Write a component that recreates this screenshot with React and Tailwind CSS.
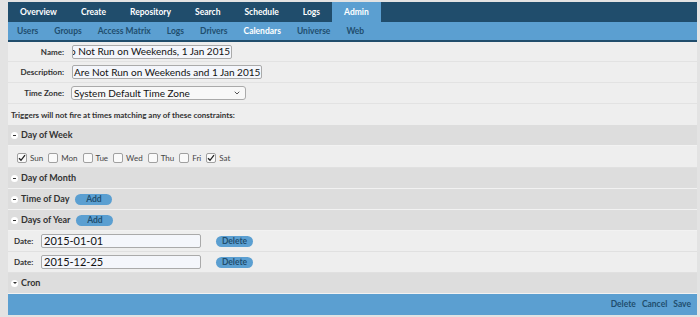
import React from 'react';
import { ChevronDown } from 'lucide-react';

const font = { fontFamily: 'Lato, "Open Sans", sans-serif' };

const topNav = ['Overview', 'Create', 'Repository', 'Search', 'Schedule', 'Logs', 'Admin'];
const subNav = ['Users', 'Groups', 'Access Matrix', 'Logs', 'Drivers', 'Calendars', 'Universe', 'Web'];
const days = [
  { label: 'Sun', checked: true },
  { label: 'Mon', checked: false },
  { label: 'Tue', checked: false },
  { label: 'Wed', checked: false },
  { label: 'Thu', checked: false },
  { label: 'Fri', checked: false },
  { label: 'Sat', checked: true },
];

function Toggle({ open = true }) {
  return (
    <span className="w-[7px] h-[7px] rounded-full bg-white flex items-center justify-center shrink-0">
      {open ? (
        <span className="w-[3px] h-[1px] bg-[#333]" />
      ) : (
        <span className="w-0 h-0 border-l-[2px] border-r-[2px] border-t-[2px] border-l-transparent border-r-transparent border-t-[#333]" />
      )}
    </span>
  );
}

function AddButton() {
  return (
    <span className="ml-[3px] w-[37px] h-[11px] rounded-full bg-[#5b9fd1] text-[#1f4e6e] text-[8.5px] font-bold flex items-center justify-center">
      Add
    </span>
  );
}

function SectionHeader({ title, add, open = true }) {
  return (
    <div className="h-[21px] bg-[#dddddd] border-b border-[#f2f2f2] flex items-center pl-[3px] gap-[3px]">
      <Toggle open={open} />
      <span className="text-[9px] font-bold text-[#333]">{title}</span>
      {add && <AddButton />}
    </div>
  );
}

function Checkbox({ checked }) {
  return (
    <span className="w-[10px] h-[10px] rounded-[2px] border border-[#a0a0a0] bg-[#fafafa] flex items-center justify-center">
      {checked && (
        <svg width="8" height="8" viewBox="0 0 8 8">
          <path d="M1 4.2 L3 6.3 L7 1.2" fill="none" stroke="#222" strokeWidth="1.3" />
        </svg>
      )}
    </span>
  );
}

function FormRow({ label, children, h = 'h-[21px]' }) {
  return (
    <div className={`${h} flex items-center border-b border-[#e2e2e2]`}>
      <span className="w-[56px] text-right text-[8px] font-bold text-[#333]">{label}</span>
      <div className="ml-[8px] flex items-center">{children}</div>
    </div>
  );
}

function DateRow({ value }) {
  return (
    <div className="h-[21px] bg-[#eeeeee] border-b border-[#e0e0e0] flex items-center pl-[6px]">
      <span className="w-[27px] text-[8px] font-bold text-[#333]">Date:</span>
      <div className="w-[160px] h-[14px] border border-[#aaa] rounded-[2px] bg-[#f4f6fb] flex items-center pl-[2px] text-[11px] text-[#111]">
        {value}
      </div>
      <span className="ml-[15px] w-[37px] h-[11px] rounded-full bg-[#5b9fd1] text-[#1f4e6e] text-[8.5px] font-bold flex items-center justify-center">
        Delete
      </span>
    </div>
  );
}

export default function App() {
  return (
    <div className="min-h-screen bg-[#e3e3e3] pt-[2px] pl-[8px] pr-[3px]" style={font}>
      <div className="bg-[#eeeeee]">
        {/* top nav */}
        <div className="h-[20px] bg-[#204d6c] flex">
          {topNav.map((t) => (
            <div
              key={t}
              className={`px-3 flex items-center text-[8.5px] font-bold text-white ${t === 'Admin' ? 'bg-[#5b9fd1]' : ''}`}
            >
              {t}
            </div>
          ))}
        </div>
        {/* sub nav */}
        <div className="h-[20px] bg-[#5b9fd1] border-b-2 border-[#204d6c] flex pl-[1px]">
          {subNav.map((t) => (
            <div
              key={t}
              className={`px-[8px] flex items-center text-[8.5px] font-bold ${t === 'Calendars' ? 'text-white' : 'text-[#1f4e6e]'}`}
            >
              {t}
            </div>
          ))}
        </div>

        {/* form */}
        <FormRow label="Name:" h="h-[20px]">
          <div className="w-[160px] h-[14px] border border-[#aaa] rounded-[2px] bg-[#f4f6fb] overflow-hidden flex items-center text-[10px] text-[#111] whitespace-nowrap">
            <span className="-ml-[3px]">o Not Run on Weekends, 1 Jan 2015</span>
          </div>
        </FormRow>
        <FormRow label="Description:">
          <div className="w-[190px] h-[14px] border border-[#aaa] rounded-[2px] bg-[#f4f6fb] overflow-hidden flex items-center pl-[1px] text-[10px] text-[#111] whitespace-nowrap">
            Are Not Run on Weekends and 1 Jan 2015
          </div>
        </FormRow>
        <FormRow label="Time Zone:">
          <div className="-ml-[1px] w-[175px] h-[14px] border border-[#aaa] rounded-[3px] bg-[#f8f8f8] flex items-center justify-between pl-[2px] pr-[4px] text-[10px] text-[#111]">
            <span>System Default Time Zone</span>
            <ChevronDown className="w-[8px] h-[8px] text-[#333]" strokeWidth={2.5} />
          </div>
        </FormRow>
        <div className="h-[21px] flex items-center pl-[3px] text-[8px] font-bold text-[#333]">
          Triggers will not fire at times matching any of these constraints:
        </div>

        <SectionHeader title="Day of Week" />
        <div className="h-[22px] bg-[#eeeeee] border-b border-[#e0e0e0] flex items-center pl-[9px] pt-[2px]">
          {days.map((d) => (
            <div key={d.label} className="flex items-center gap-[3px] mr-[5px]">
              <Checkbox checked={d.checked} />
              <span className="text-[8px] text-[#444]">{d.label}</span>
            </div>
          ))}
        </div>
        <SectionHeader title="Day of Month" />
        <SectionHeader title="Time of Day" add />
        <SectionHeader title="Days of Year" add />
        <DateRow value="2015-01-01" />
        <DateRow value="2015-12-25" />
        <SectionHeader title="Cron" open={false} />

        {/* footer */}
        <div className="h-[21px] bg-[#5b9fd1] flex items-center justify-end gap-[6px] pr-[6px] text-[8.5px] font-bold text-[#1f4e6e]">
          <span>Delete</span>
          <span>Cancel</span>
          <span>Save</span>
        </div>
      </div>
    </div>
  );
}
